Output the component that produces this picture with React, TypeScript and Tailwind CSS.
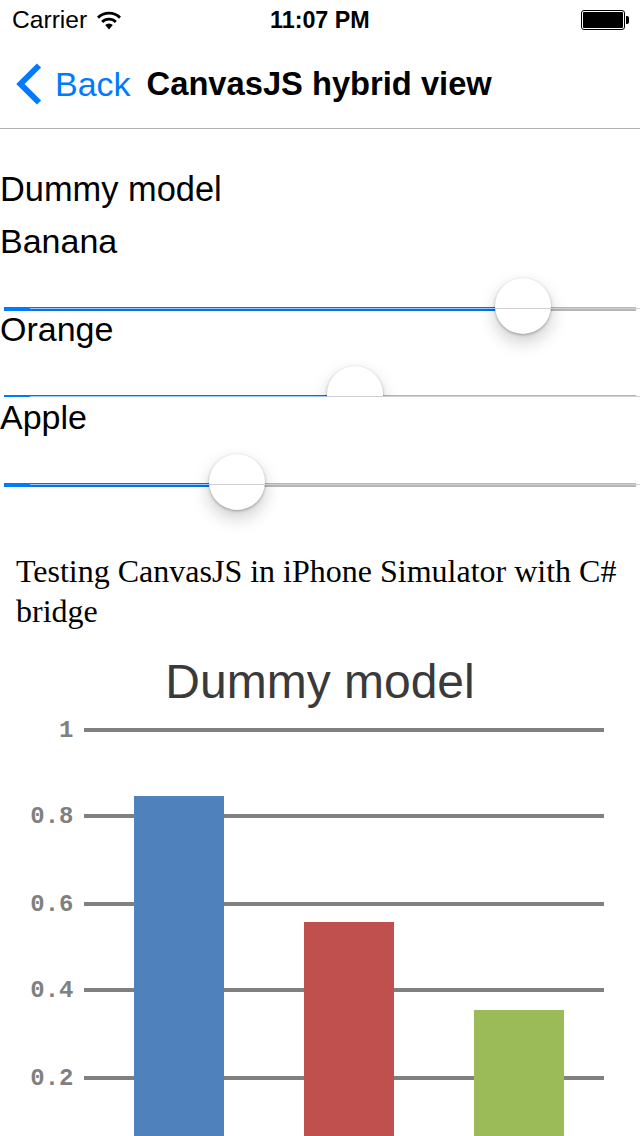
import React from "react";

const sans = "font-['Liberation_Sans',Arial,sans-serif]";

const Slider: React.FC<{ label: string; thumb: number; clip?: boolean }> = ({
  label,
  thumb,
  clip,
}) => (
  <div className="relative">
    <div className="h-[44px] text-[34px] leading-[41px] text-black">{label}</div>
    <div className={`relative h-[44px] ${clip ? "overflow-hidden" : ""}`}>
      {/* unfilled part */}
      <div className="absolute left-[4px] right-[4px] top-[42px] h-[4px] bg-[#b6b6b6]" />
      {/* filled part */}
      <div
        className="absolute left-[4px] top-[42px] h-[4px] bg-[#0a6fe8]"
        style={{ width: thumb - 4 }}
      />
      <div className="absolute left-[4px] top-[42px] h-[4px] w-[26px] bg-[#007aff]" />
      <div
        className="absolute top-[13px] h-[56px] w-[56px] rounded-full bg-white shadow-[0_8px_18px_rgba(0,0,0,0.2),0_1px_3px_rgba(0,0,0,0.3)]"
        style={{ left: thumb }}
      />
      {/* hairlines running through the control */}
      <div
        className="absolute left-[30px] top-[43px] h-px bg-[#9cc9ff]"
        style={{ width: thumb - 30 }}
      />
      <div
        className="absolute right-0 top-[43px] h-px bg-[#cfcfcf]"
        style={{ left: thumb }}
      />
    </div>
  </div>
);

const Wifi = () => (
  <svg width="24" height="20" viewBox="0 0 24 20" className="ml-[10px]">
    <path d="M0 6.6a17 17 0 0 1 24 0l-2 2.2a14 14 0 0 0-20 0z" fill="#000" />
    <path d="M4.2 11a11 11 0 0 1 15.6 0l-2 2.1a8 8 0 0 0-11.6 0z" fill="#000" />
    <path d="M8.2 15a5.4 5.4 0 0 1 7.6 0L12 19.5z" fill="#000" />
  </svg>
);

const Chart = () => {
  const grid = [
    { y: 99, label: "1" },
    { y: 185, label: "0.8" },
    { y: 273, label: "0.6" },
    { y: 359, label: "0.4" },
    { y: 447, label: "0.2" },
  ];
  const bars = [
    { x: 134, top: 165, fill: "#4f81bc" },
    { x: 304, top: 291, fill: "#c0504e" },
    { x: 474, top: 379, fill: "#9bbb58" },
  ];
  return (
    <svg width="640" height="505" viewBox="0 0 640 505" className="block">
      <text
        x="320"
        y="67"
        textAnchor="middle"
        fontFamily="'Liberation Sans', Arial, sans-serif"
        fontSize="48"
        fill="#3a3a3a"
      >
        Dummy model
      </text>
      {grid.map((g) => (
        <g key={g.label}>
          <rect x="84" y={g.y - 2} width="520" height="4" fill="#808080" />
          <text
            x="73.5"
            y={g.y + 7}
            textAnchor="end"
            fontFamily="'Liberation Mono', 'Courier New', monospace"
            fontWeight="700"
            fontSize="24"
            fill="#808080"
          >
            {g.label}
          </text>
        </g>
      ))}
      {bars.map((b) => (
        <rect key={b.x} x={b.x} y={b.top} width="90" height={505 - b.top} fill={b.fill} />
      ))}
    </svg>
  );
};

export default function App() {
  return (
    <div className={`h-[1136px] w-[640px] overflow-hidden bg-white ${sans}`}>
      <div className="flex h-[129px] flex-col border-b border-[#b2b2b2]">
        <div className="relative flex h-[40px] items-center pl-[12px] text-[24.6px] leading-none text-black">
          <span>Carrier</span>
          <Wifi />
          <span className="absolute left-[270px] top-[9px] text-[23.3px] font-bold">11:07 PM</span>
          <div className="ml-auto mr-[11px] flex items-center">
            <div className="h-[20px] w-[44px] rounded-[3px] border border-black bg-white p-px">
              <div className="h-full w-full rounded-[1px] bg-black" />
            </div>
            <div className="ml-px h-[8px] w-[3px] rounded-r-[2px] bg-black" />
          </div>
        </div>
        <div className="flex h-[88px] items-center pl-[16px]">
          <svg width="26" height="42" viewBox="0 0 26 42">
            <path d="M23 2.5 4.5 21 23 39.5" fill="none" stroke="#007aff" strokeWidth="6" />
          </svg>
          <span className="ml-[13px] text-[34px] text-[#007aff]">Back</span>
          <span className="ml-[16px] text-[32.7px] font-bold text-black">CanvasJS hybrid view</span>
        </div>
      </div>
      <div className="mb-[10px] mt-[38px] h-[44px] text-[34.4px] leading-[44px] text-black">Dummy model</div>
      <Slider label="Banana" thumb={495} />
      <Slider label="Orange" thumb={327} clip />
      <Slider label="Apple" thumb={209} />
      <p className="mt-[66px] px-[16px] font-['Liberation_Serif','Times_New_Roman',serif] text-[32px] leading-[40px] text-black">
        Testing CanvasJS in iPhone Simulator with C# bridge
      </p>
      <Chart />
    </div>
  );
}
